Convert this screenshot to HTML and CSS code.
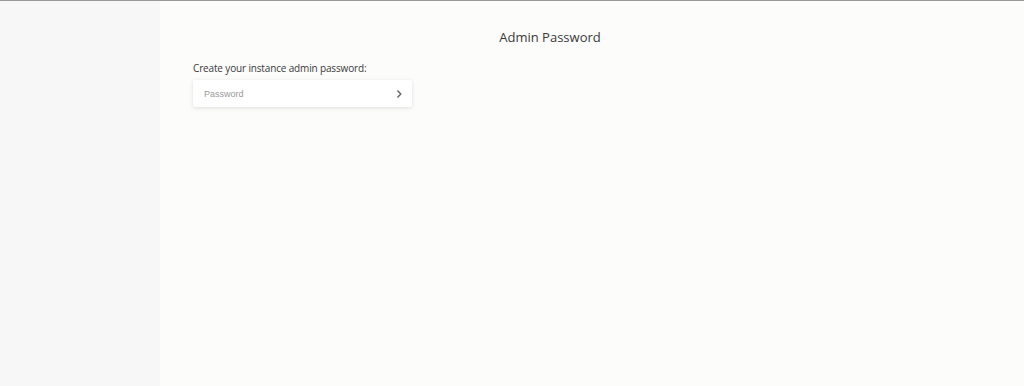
FILE: index.html
```html
<!DOCTYPE html>
<html lang="en">
<head>
  <meta charset="UTF-8" />
  <title>Admin Password</title>
  <link rel="stylesheet" href="styles.css">
</head>
<body>
  <div class="layout">
    <!-- Sidebar -->
    <aside class="sidebar"></aside>

    <!-- Main -->
    <main class="main">
      <div class="setup">
        <h1 class="setup-title">Admin Password</h1>
        <label class="field-label" for="password">Create your instance admin password:</label>
        <div class="field">
          <input id="password" type="password" placeholder="Password">
          <button class="field-go" aria-label="Next">
            <svg width="8" height="10" viewBox="0 0 8 10"><path d="M2.5 1.5 L5.8 5 L2.5 8.5" fill="none" stroke="#666" stroke-width="1.4"/></svg>
          </button>
        </div>
      </div>
    </main>
  </div>
</body>
</html>
```

FILE: styles.css
```css
/* Basic Reset */
* {
  margin: 0;
  padding: 0;
  box-sizing: border-box;
}

body {
  font-family: 'Open Sans', sans-serif;
  color: #333;
  height: 100vh;
  border-top: 1px solid #999;
}

.layout {
  display: flex;
  height: 100%;
}

/* Sidebar */
.sidebar {
  width: 160px;
  background: #f7f7f7;
}

/* Main */
.main {
  flex: 1;
  background: #fcfcfa;
  padding: 0 117px 0 33px;
}

.setup {
  padding-top: 27px;
}

.setup-title {
  font-size: 13px;
  font-weight: 400;
  text-align: center;
  color: #3a3a3a;
  line-height: 18px;
  margin-bottom: 15px;
}

.field-label {
  display: block;
  font-size: 10px;
  letter-spacing: -0.15px;
  color: #3a3a3a;
  line-height: 15px;
  margin-bottom: 4px;
}

.field {
  width: 219px;
  height: 27px;
  background: #fff;
  box-shadow: 0 1px 4px rgba(0, 0, 0, 0.12);
  border-radius: 2px;
  display: flex;
  align-items: center;
}

.field input {
  flex: 1;
  border: none;
  outline: none;
  background: transparent;
  padding-left: 11px;
  font-family: 'Liberation Sans', Arial, sans-serif;
  font-size: 9px;
  color: #333;
}

.field input::placeholder {
  color: #999;
}

.field-go {
  border: none;
  background: transparent;
  width: 26px;
  height: 27px;
  display: flex;
  align-items: center;
  justify-content: center;
  cursor: pointer;
}
```
